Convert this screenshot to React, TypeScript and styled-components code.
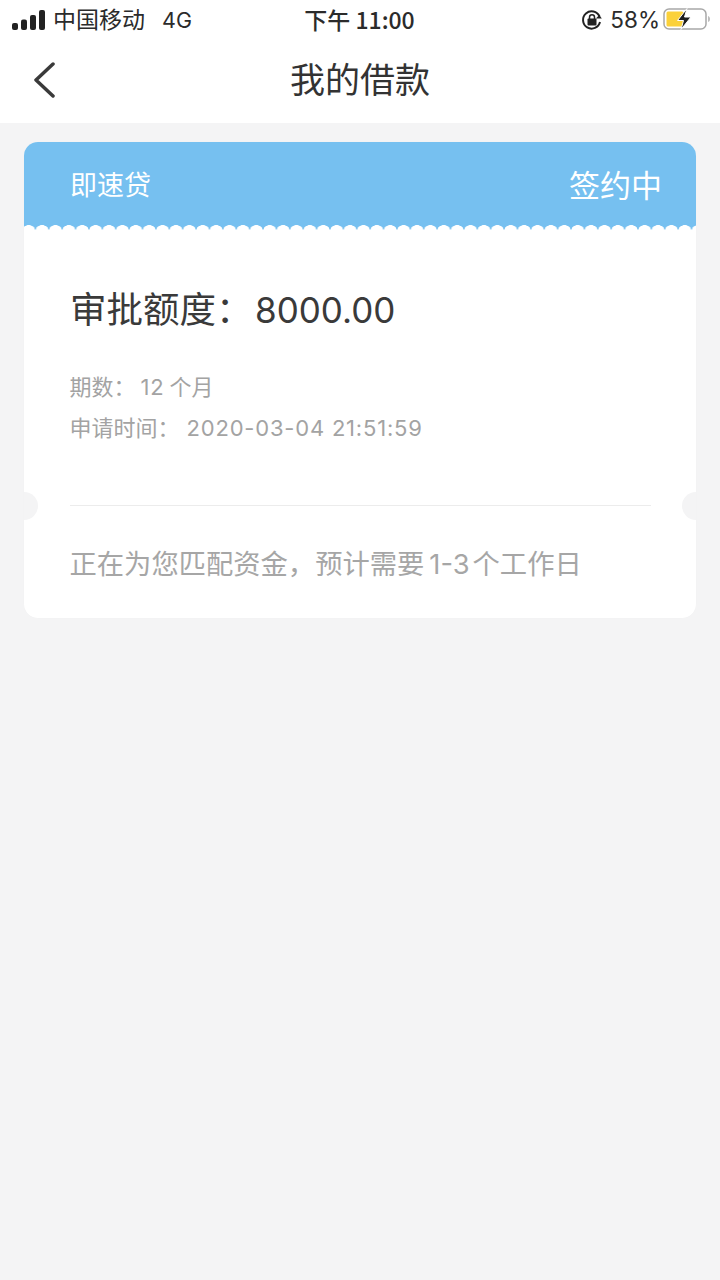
import React from "react";
import styled, { createGlobalStyle } from "styled-components";

const Global = createGlobalStyle`
  html, body { margin: 0; padding: 0; background: #f4f4f5; }
  * { box-sizing: border-box; }
  body { font-family: "Noto Sans CJK SC", "Noto Sans", sans-serif; }
`;

const Page = styled.div`
  width: 720px;
  height: 1280px;
  background: #f4f4f5;
  display: flex;
  flex-direction: column;
  overflow: hidden;
`;

const Top = styled.header`
  height: 123px;
  background: #fff;
  display: flex;
  flex-direction: column;
`;

const StatusBar = styled.div`
  height: 40px;
  display: grid;
  grid-template-columns: 1fr auto 1fr;
  align-items: center;
  padding: 0 9px 0 12px;
  color: #2b2b2b;
`;

const StatusLeft = styled.div`
  display: flex;
  align-items: center;
`;

const StatusRight = styled.div`
  display: flex;
  align-items: center;
  justify-content: flex-end;
`;

const Carrier = styled.span`
  font-size: 23px;
  line-height: 36px;
  margin: 0 0 4px 8px;
`;

const Net = styled.span`
  font-family: "Inter", sans-serif;
  font-size: 21.5px;
  line-height: 40px;
  margin-left: 17px;
`;

const Clock = styled.span`
  font-size: 23px;
  line-height: 38px;
  margin: 0 4px 2px 0;
  font-weight: 500;
`;

const Percent = styled.span`
  font-family: "Inter", sans-serif;
  font-size: 22.5px;
  line-height: 40px;
  margin: 0 3px 0 7px;
`;

const NavBar = styled.nav`
  position: relative;
  height: 83px;
  display: flex;
  align-items: center;
  justify-content: center;
  padding-bottom: 8px;
`;

const Back = styled.svg`
  position: absolute;
  left: 32px;
  top: 22px;
`;

const Title = styled.h1`
  margin: 0;
  font-size: 35px;
  line-height: 48px;
  font-weight: 400;
  color: #333;
`;

const Content = styled.main`
  padding: 19px 24px 0;
`;

const Card = styled.section`
  position: relative;
  height: 476px;
  background: #fff;
  border-radius: 14px;
  overflow: hidden;
  box-shadow: 0 0 1px rgba(0, 0, 0, 0.04);
`;

const CardHead = styled.div`
  position: relative;
  height: 88px;
  background: #76c0f0;
  display: flex;
  align-items: center;
  justify-content: space-between;
  padding: 0 34px 5px 46px;
  color: #fff;
  &::after {
    content: "";
    position: absolute;
    left: -2px;
    right: 0;
    bottom: 0;
    height: 5px;
    background: radial-gradient(ellipse 6.6px 5px at 50% 100%, #fff 0, #fff 92%, transparent 100%) 0 0 / 13.4px 5px repeat-x;
  }
`;

const Product = styled.span`
  font-size: 27px;
  line-height: 40px;
`;

const State = styled.span`
  font-size: 31px;
  line-height: 44px;
`;

const Body = styled.div`
  padding: 50px 46px 0 45.5px;
`;

const Amount = styled.div`
  display: flex;
  align-items: baseline;
  font-size: 36.5px;
  line-height: 56px;
  color: #3a3a3a;
  margin: 0 0 27px 0.5px;
`;

const AmountLabel = styled.span`
  width: 185px;
`;

const AmountValue = styled.span`
  font-family: "Inter", sans-serif;
  font-size: 35px;
`;

const Meta = styled.div`
  height: 41px;
  font-size: 22px;
  line-height: 40px;
  color: #a3a3a3;
  white-space: nowrap;
`;

const MetaNum = styled.span<{ $left: number; $right?: number }>`
  font-family: "Inter", sans-serif;
  letter-spacing: 0.8px;
  margin: 0 ${(p) => p.$right ?? 0}px 0 ${(p) => p.$left}px;
`;

const NoteNum = styled.span`
  font-family: "Inter", sans-serif;
  margin: 0 3px 0 5px;
`;

const Notch = styled.span<{ $side: "left" | "right" }>`
  position: absolute;
  top: 350px;
  ${(p) => p.$side}: -14px;
  width: 28px;
  height: 28px;
  border-radius: 50%;
  background: #f4f4f5;
`;

const Divider = styled.hr`
  margin: 58px 45px 0 46px;
  border: 0;
  border-top: 1px solid #ececec;
`;

const Note = styled.p`
  margin: 35px 45px 0 45.5px;
  font-size: 27.3px;
  line-height: 42px;
  color: #a6a6a6;
  white-space: nowrap;
`;

const SignalIcon = () => (
  <svg width="33" height="20" viewBox="0 0 33 20">
    <rect x="0" y="13" width="6" height="7" rx="2" fill="#222" />
    <rect x="9" y="9.500" width="6" height="10.500" rx="2" fill="#222" />
    <rect x="18" y="5" width="6" height="15" rx="2" fill="#222" />
    <rect x="27" y="0" width="6" height="20" rx="2" fill="#222" />
  </svg>
);

const LockIcon = () => (
  <svg width="22" height="22" viewBox="0 0 22 22">
    <path d="M18.500 7.500A8.600 8.600 0 1 0 19 13" fill="none" stroke="#222" strokeWidth="2" />
    <path d="M20.800 9.500h-6l3.600-3.400z" fill="#222" />
    <rect x="6.500" y="9.500" width="9" height="7" rx="1" fill="#222" />
    <path d="M8.500 10V8.200a2.500 2.500 0 0 1 5 0V10" fill="none" stroke="#222" strokeWidth="1.500" />
  </svg>
);

const BatteryIcon = () => (
  <svg width="48" height="24" viewBox="0 1 48 24">
    <rect x="1" y="2" width="42" height="20" rx="5" fill="#fff" stroke="#a8a8a8" strokeWidth="1.500" />
    <rect x="3.500" y="4.500" width="17" height="15" rx="1.500" fill="#fbd13a" />
    <path d="M45 9c1.500.5 2 1.500 2 3s-.5 2.500-2 3z" fill="#bdbdbd" />
    <path d="M24 1.500 14.500 13.500h6L18 22.500l10-12.500h-6.500z" fill="#1d1d1d" stroke="#fff" strokeWidth="1" />
  </svg>
);

export default function App() {
  return (
    <Page>
      <Global />
      <Top>
        <StatusBar>
          <StatusLeft>
            <SignalIcon />
            <Carrier>中国移动</Carrier>
            <Net>4G</Net>
          </StatusLeft>
          <Clock>下午 11:00</Clock>
          <StatusRight>
            <LockIcon />
            <Percent>58%</Percent>
            <BatteryIcon />
          </StatusRight>
        </StatusBar>
        <NavBar>
          <Back width="24" height="36" viewBox="0 0 24 36">
            <path d="M21 2 4 18l17 16" fill="none" stroke="#3a3a3a" strokeWidth="3.500" strokeLinecap="round" strokeLinejoin="round" />
          </Back>
          <Title>我的借款</Title>
        </NavBar>
      </Top>
      <Content>
        <Card>
          <CardHead>
            <Product>即速贷</Product>
            <State>签约中</State>
          </CardHead>
          <Body>
            <Amount>
              <AmountLabel>审批额度：</AmountLabel>
              <AmountValue>8000.00</AmountValue>
            </Amount>
            <Meta>期数：<MetaNum $left={5} $right={5}>12</MetaNum>个月</Meta>
            <Meta>申请时间：<MetaNum $left={7}>2020-03-04 21:51:59</MetaNum></Meta>
          </Body>
          <Divider />
          <Note>正在为您匹配资金，预计需要<NoteNum>1-3</NoteNum>个工作日</Note>
          <Notch $side="left" />
          <Notch $side="right" />
        </Card>
      </Content>
    </Page>
  );
}
